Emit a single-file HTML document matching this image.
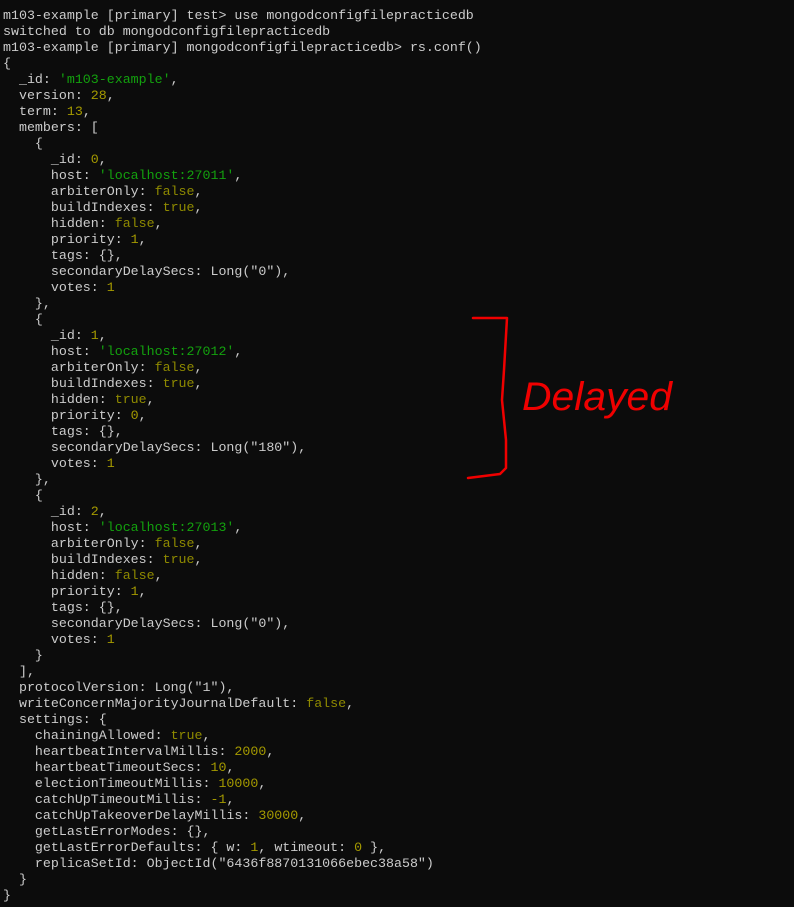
<!DOCTYPE html>
<html><head><meta charset="utf-8"><style>
html,body{margin:0;padding:0;background:#0c0c0c;width:794px;height:907px;overflow:hidden}
pre{margin:0;position:absolute;left:3px;top:8px;font-family:"Liberation Mono",monospace;font-size:13.3px;line-height:16px;color:#cccccc}
.s{color:#13a10e}.n{color:#a59a00}.b{color:#8f8a00}
svg{position:absolute;left:0;top:0}
</style></head><body>
<pre>m103-example [primary] test&gt; use mongodconfigfilepracticedb
switched to db mongodconfigfilepracticedb
m103-example [primary] mongodconfigfilepracticedb&gt; rs.conf()
{
  _id: <span class="s">'m103-example'</span>,
  version: <span class="n">28</span>,
  term: <span class="n">13</span>,
  members: [
    {
      _id: <span class="n">0</span>,
      host: <span class="s">'localhost:27011'</span>,
      arbiterOnly: <span class="b">false</span>,
      buildIndexes: <span class="b">true</span>,
      hidden: <span class="b">false</span>,
      priority: <span class="n">1</span>,
      tags: {},
      secondaryDelaySecs: Long("0"),
      votes: <span class="n">1</span>
    },
    {
      _id: <span class="n">1</span>,
      host: <span class="s">'localhost:27012'</span>,
      arbiterOnly: <span class="b">false</span>,
      buildIndexes: <span class="b">true</span>,
      hidden: <span class="b">true</span>,
      priority: <span class="n">0</span>,
      tags: {},
      secondaryDelaySecs: Long("180"),
      votes: <span class="n">1</span>
    },
    {
      _id: <span class="n">2</span>,
      host: <span class="s">'localhost:27013'</span>,
      arbiterOnly: <span class="b">false</span>,
      buildIndexes: <span class="b">true</span>,
      hidden: <span class="b">false</span>,
      priority: <span class="n">1</span>,
      tags: {},
      secondaryDelaySecs: Long("0"),
      votes: <span class="n">1</span>
    }
  ],
  protocolVersion: Long("1"),
  writeConcernMajorityJournalDefault: <span class="b">false</span>,
  settings: {
    chainingAllowed: <span class="b">true</span>,
    heartbeatIntervalMillis: <span class="n">2000</span>,
    heartbeatTimeoutSecs: <span class="n">10</span>,
    electionTimeoutMillis: <span class="n">10000</span>,
    catchUpTimeoutMillis: <span class="n">-1</span>,
    catchUpTakeoverDelayMillis: <span class="n">30000</span>,
    getLastErrorModes: {},
    getLastErrorDefaults: { w: <span class="n">1</span>, wtimeout: <span class="n">0</span> },
    replicaSetId: ObjectId("6436f8870131066ebec38a58")
  }
}</pre>
<svg width="794" height="907">
<path d="M473 318 L507 318 L504 370 L502 400 L506 440 L506 468 L500 474 L468 478" fill="none" stroke="#f00000" stroke-width="2.5" stroke-linejoin="round" stroke-linecap="round"/>
<text x="522" y="410" font-family="Liberation Sans, sans-serif" font-size="40" fill="#f00000" font-style="italic" textLength="150" lengthAdjust="spacingAndGlyphs">Delayed</text>
</svg>
</body></html>
